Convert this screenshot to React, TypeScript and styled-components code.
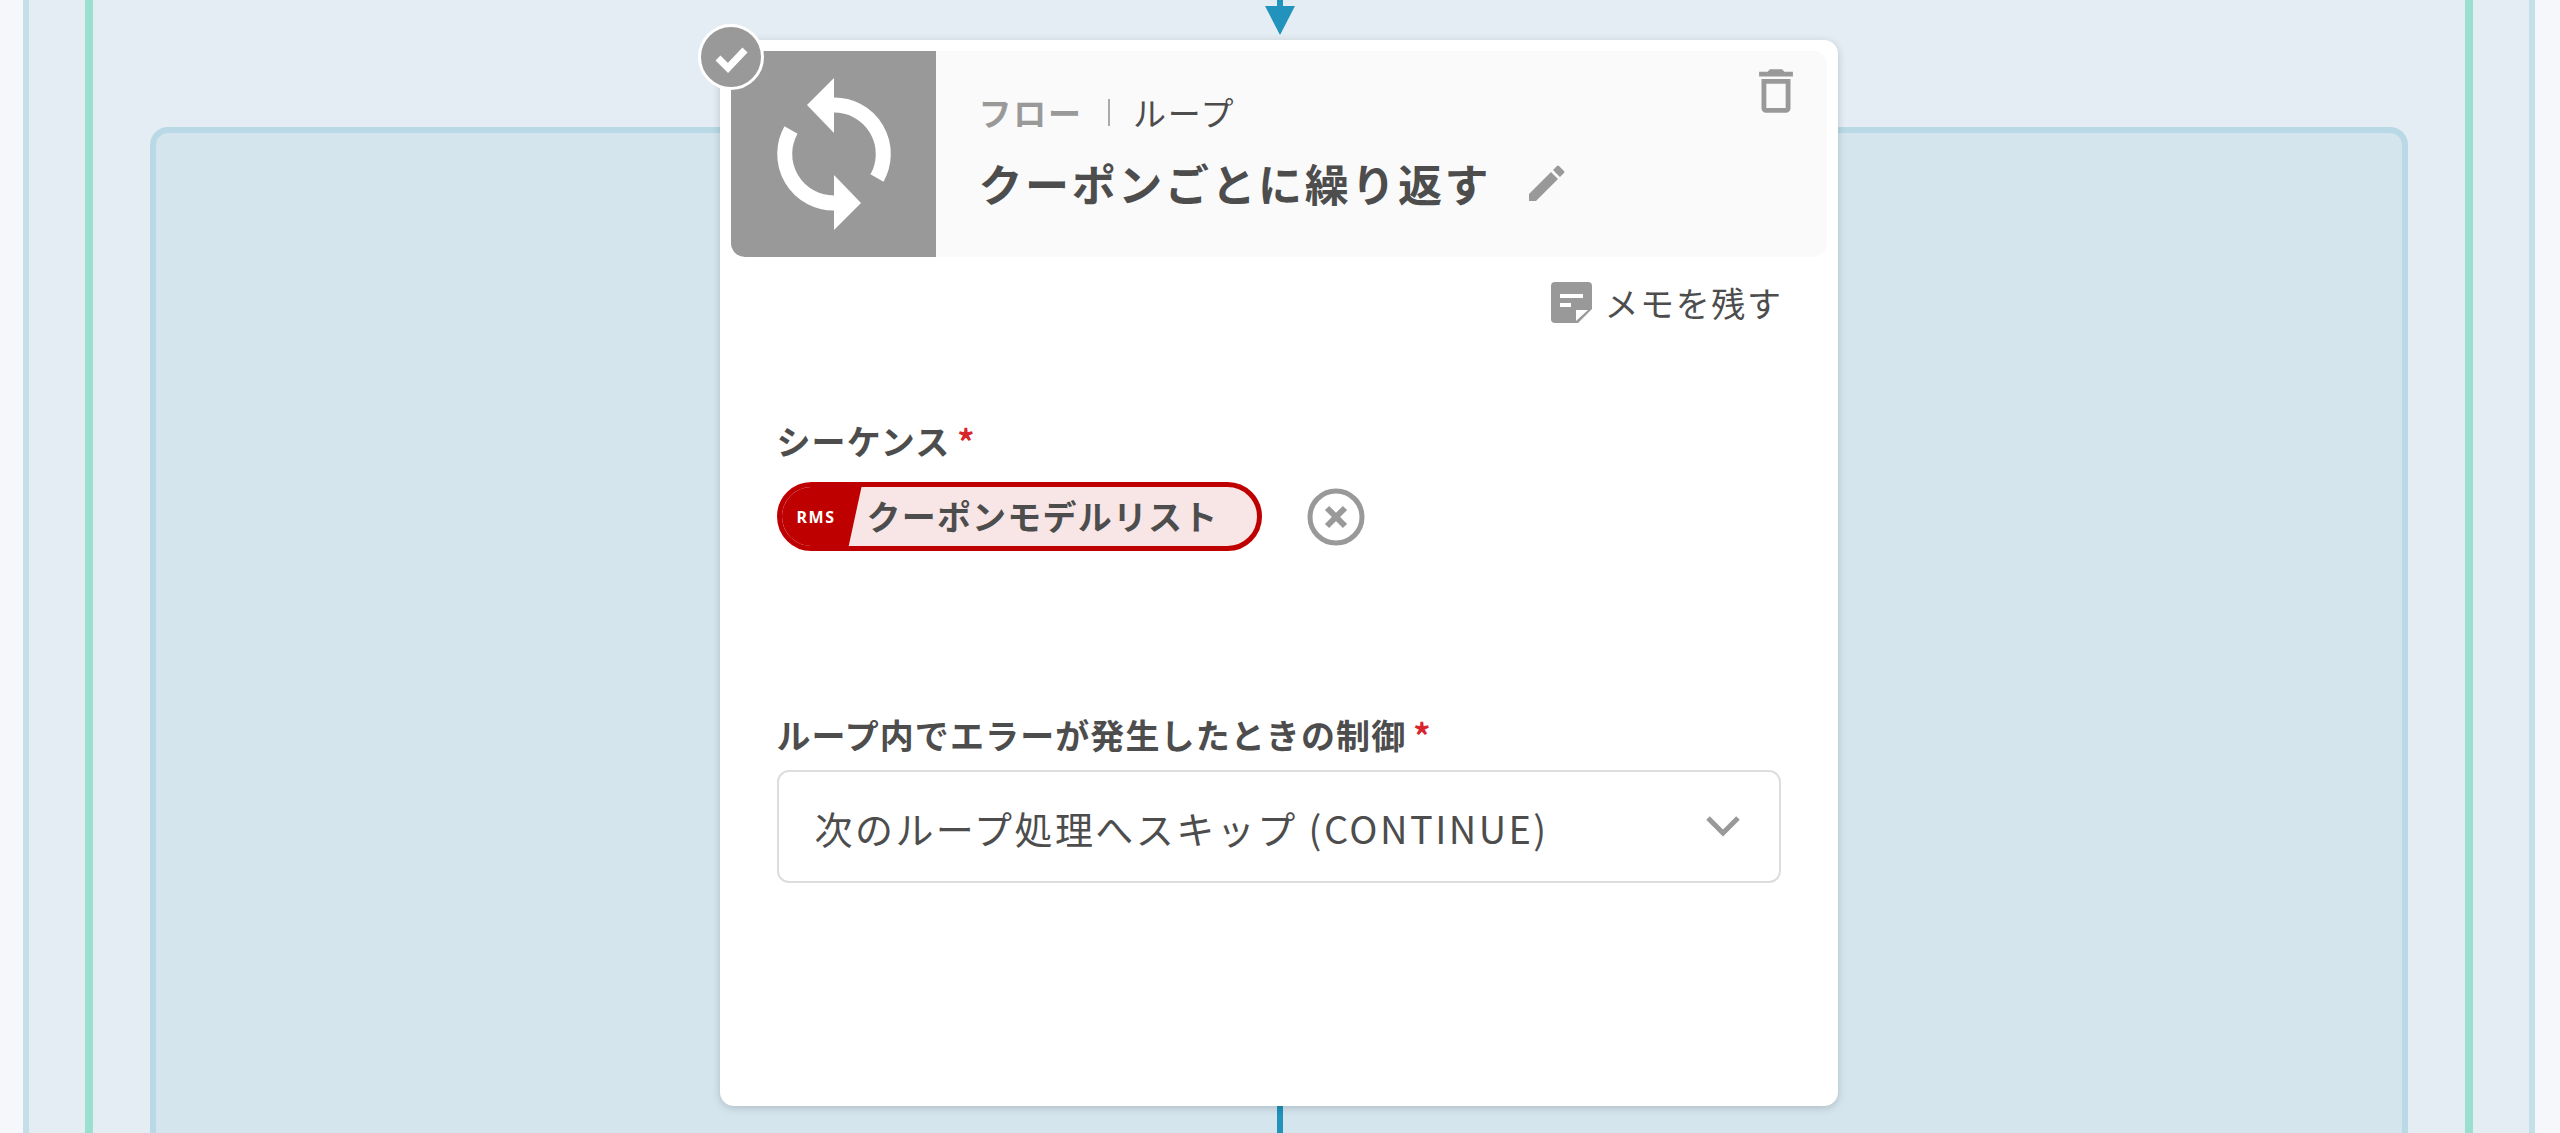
import React from 'react';
import styled, { createGlobalStyle } from 'styled-components';

const GlobalStyle = createGlobalStyle`
  html, body {
    margin: 0;
    height: 1133px;
    overflow: hidden;
    background: #f5f7fa;
    font-family: "Noto Sans CJK JP", "Noto Sans", sans-serif;
    color: #4d4d4d;
  }
`;

const Page = styled.div`
  height: 1133px;
  padding: 0 25px 0 23px;
  box-sizing: border-box;
  display: flex;
`;

const OuterLane = styled.div`
  flex: 1;
  display: flex;
  background: #e5edf4;
  border-left: 6px solid #c5dfe9;
  border-right: 6px solid #c5dfe9;
  padding: 0 56px;
`;

const LoopLane = styled.div`
  flex: 1;
  display: grid;
  border-left: 8px solid #9bdfd0;
  border-right: 8px solid #9bdfd0;
  padding: 0 57px;
`;

const InnerBox = styled.div`
  grid-area: 1 / 1;
  margin-top: 127px;
  background: #d5e5ee;
  border: 6px solid #b9d9e6;
  border-bottom: none;
  border-radius: 18px 18px 0 0;
`;

const NodeColumn = styled.div`
  grid-area: 1 / 1;
  display: flex;
  flex-direction: column;
  align-items: center;
  padding-right: 1px;
`;

const ArrowHead = styled.svg`
  display: block;
  width: 30px;
  height: 40px;
  margin-left: 2px;
`;

const Connector = styled.div`
  width: 6px;
  height: 27px;
  margin-left: 2px;
  background: #2193bc;
`;

const Card = styled.div`
  position: relative;
  width: 1118px;
  height: 1066px;
  box-sizing: border-box;
  padding: 11px;
  background: #fff;
  border-radius: 14px;
  box-shadow: 0 2px 8px rgba(0, 0, 0, 0.18);
`;

const StatusBadge = styled.div`
  position: absolute;
  left: -22px;
  top: -16px;
  width: 66px;
  height: 66px;
  box-sizing: border-box;
  border: 3px solid #fff;
  border-radius: 50%;
  background: #999;
  display: flex;
  align-items: center;
  justify-content: center;
`;

const Header = styled.div`
  height: 206px;
  display: flex;
  background: #fafafa;
  border-radius: 0 14px 14px 14px;
`;

const HeaderIcon = styled.div`
  width: 205px;
  flex: none;
  background: #999;
  border-radius: 0 0 0 14px;
  display: flex;
  align-items: center;
  justify-content: center;
`;

const HeaderBody = styled.div`
  flex: 1;
  padding: 39px 0 0 43px;
`;

const Breadcrumb = styled.div`
  display: flex;
  align-items: center;
  height: 44px;
  font-size: 33px;
  line-height: 44px;
  letter-spacing: 1.8px;
`;

const Category = styled.span`
  color: #999;
  font-weight: 700;
`;

const Divider = styled.span`
  width: 2px;
  height: 27px;
  margin: 0 23px 0 25px;
  background: #aaa;
`;

const TitleRow = styled.div`
  display: flex;
  align-items: center;
  margin-top: 19px;
  height: 60px;
`;

const Title = styled.h1`
  margin: 0;
  font-size: 44px;
  line-height: 60px;
  font-weight: 700;
  letter-spacing: 2.6px;
`;

const IconButton = styled.button`
  border: none;
  background: none;
  padding: 0;
  display: flex;
  cursor: pointer;
`;

const EditButton = styled(IconButton)`
  margin-left: 38px;
`;

const TrashButton = styled(IconButton)`
  align-self: flex-start;
  margin: 11px 22px 0 0;
`;

const GrayIcon = styled.svg`
  display: block;
  fill: #999;
`;

const Body = styled.div`
  padding: 0 46px;
`;

const MemoRow = styled.div`
  display: flex;
  justify-content: flex-end;
  align-items: center;
  gap: 13px;
  height: 44px;
  margin: 23px -2px 0 0;
  font-size: 34px;
  letter-spacing: 1.6px;
`;

const Field = styled.div<{ $top: number }>`
  margin-top: ${(p) => p.$top}px;
`;

const Label = styled.div`
  font-size: 34px;
  line-height: 44px;
  font-weight: 700;
  letter-spacing: 1.1px;
`;

const Required = styled.span`
  color: #d9262c;
  margin-left: 7px;
`;

const ChipRow = styled.div`
  display: flex;
  align-items: center;
  gap: 45px;
  margin-top: 19px;
`;

const Chip = styled.div`
  position: relative;
  display: flex;
  align-items: center;
  width: 485px;
  height: 69px;
  box-sizing: border-box;
  border: 5px solid #bf0000;
  border-radius: 35px;
  background: #f8e5e5;
  overflow: hidden;
  padding: 0 0 2px 85px;
  font-size: 34px;
  font-weight: 700;
  letter-spacing: 1.2px;
`;

const ChipTag = styled.div`
  position: absolute;
  left: 0;
  top: 0;
  bottom: 0;
  width: 80px;
  padding-left: 15px;
  box-sizing: border-box;
  background: #bf0000;
  clip-path: polygon(0 0, 100% 0, 84% 100%, 0 100%);
  color: #fff;
  font-family: "Noto Sans", sans-serif;
  font-size: 16px;
  font-weight: 700;
  letter-spacing: 1.6px;
  display: flex;
  align-items: center;
`;

const Select = styled.div`
  display: flex;
  align-items: center;
  justify-content: space-between;
  height: 113px;
  box-sizing: border-box;
  margin-top: 13px;
  padding: 1px 38px 0 36px;
  border: 2px solid #ddd;
  border-radius: 12px;
  font-size: 38px;
  letter-spacing: 2.45px;
`;

const Chevron = styled.svg`
  display: block;
  fill: none;
  stroke: #999;
  stroke-width: 5;
`;

const LoopIcon = () => (
  <svg width="205" height="206" viewBox="0 0 205 206">
    <g fill="none" stroke="#fff" strokeWidth="15">
      <path d="M103 54 A49 49 0 0 1 146 127" />
      <path d="M103 152 A49 49 0 0 1 60 79" />
    </g>
    <path d="M103 27 L76 54 L103 82 Z" fill="#fff" />
    <path d="M103 124 L130 152 L103 179 Z" fill="#fff" />
  </svg>
);

const MemoIcon = () => (
  <GrayIcon width="41" height="41" viewBox="0 0 41 41">
    <path d="M4 0 H37 A4 4 0 0 1 41 4 V27 L27 41 H4 A4 4 0 0 1 0 37 V4 A4 4 0 0 1 4 0 Z" />
    <path d="M9 12 H32 V16 H9 Z M9 21 H20 V25 H9 Z" fill="#fff" />
    <path d="M25 39 V28 H37 Z" fill="#fff" />
  </GrayIcon>
);

const App: React.FC = () => (
  <>
    <GlobalStyle />
    <Page>
      <OuterLane>
        <LoopLane>
          <InnerBox />
          <NodeColumn>
            <ArrowHead viewBox="0 0 30 40">
              <path d="M12 0 H18 V6 H30 L15 35 L0 6 H12 Z" fill="#2193bc" />
            </ArrowHead>
            <Card>
              <StatusBadge>
                <svg width="40" height="40" viewBox="0 0 40 40">
                  <path d="M7 21 L17 31 L34 13" fill="none" stroke="#fff" strokeWidth="7" />
                </svg>
              </StatusBadge>
              <Header>
                <HeaderIcon>
                  <LoopIcon />
                </HeaderIcon>
                <HeaderBody>
                  <Breadcrumb>
                    <Category>フロー</Category>
                    <Divider />
                    <span>ループ</span>
                  </Breadcrumb>
                  <TitleRow>
                    <Title>クーポンごとに繰り返す</Title>
                    <EditButton>
                      <GrayIcon width="36" height="36" viewBox="0 0 36 36">
                        <path d="M0 36 V29 L22 7 L29 14 L7 36 Z M24 5 L28 1 Q29 0 30 1 L35 6 Q36 7 35 8 L31 12 Z" />
                      </GrayIcon>
                    </EditButton>
                  </TitleRow>
                </HeaderBody>
                <TrashButton>
                  <GrayIcon width="58" height="58" viewBox="0 0 24 24">
                    <path d="M6 19c0 1.1.9 2 2 2h8c1.1 0 2-.9 2-2V7H6v12zM8 9h8v10H8V9zm7.5-5l-1-1h-5l-1 1H5v2h14V4h-3.5z" />
                  </GrayIcon>
                </TrashButton>
              </Header>
              <Body>
                <MemoRow>
                  <MemoIcon />
                  <span>メモを残す</span>
                </MemoRow>
                <Field $top={95}>
                  <Label>
                    シーケンス<Required>*</Required>
                  </Label>
                  <ChipRow>
                    <Chip>
                      <ChipTag>RMS</ChipTag>
                      クーポンモデルリスト
                    </Chip>
                    <svg width="58" height="58" viewBox="0 0 58 58">
                      <circle cx="29" cy="29" r="26" fill="none" stroke="#999" strokeWidth="5" />
                      <path d="M20 20 L38 38 M38 20 L20 38" fill="none" stroke="#999" strokeWidth="6" />
                    </svg>
                  </ChipRow>
                </Field>
                <Field $top={162}>
                  <Label>
                    ループ内でエラーが発生したときの制御<Required>*</Required>
                  </Label>
                  <Select>
                    <span>次のループ処理へスキップ (CONTINUE)</span>
                    <Chevron width="36" height="24" viewBox="0 0 36 24">
                      <path d="M3 3 L18 18 L33 3" />
                    </Chevron>
                  </Select>
                </Field>
              </Body>
            </Card>
            <Connector />
          </NodeColumn>
        </LoopLane>
      </OuterLane>
    </Page>
  </>
);

export default App;
